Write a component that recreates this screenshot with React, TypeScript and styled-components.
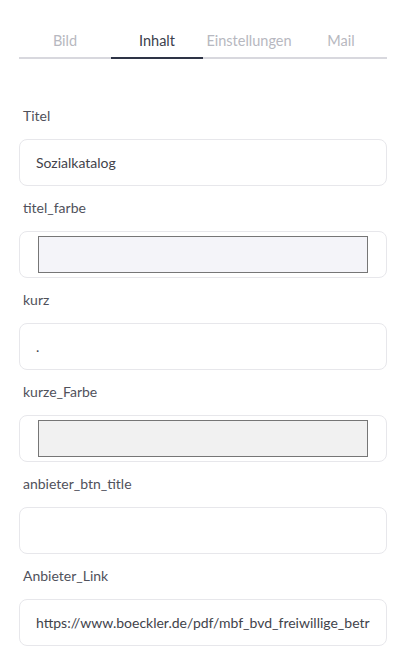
import styled, { createGlobalStyle } from "styled-components";

const GlobalStyle = createGlobalStyle`
  body {
    margin: 0;
    background: #ffffff;
    font-family: "Lato", "Noto Sans", sans-serif;
  }
`;

const TABS = ["Bild", "Inhalt", "Einstellungen", "Mail"];
const ACTIVE_TAB = "Inhalt";

type Field =
  | { label: string; kind: "text"; value: string }
  | { label: string; kind: "color"; color: string };

const FIELDS: Field[] = [
  { label: "Titel", kind: "text", value: "Sozialkatalog" },
  { label: "titel_farbe", kind: "color", color: "#f4f4f9" },
  { label: "kurz", kind: "text", value: "." },
  { label: "kurze_Farbe", kind: "color", color: "#f1f1f1" },
  { label: "anbieter_btn_title", kind: "text", value: "" },
  {
    label: "Anbieter_Link",
    kind: "text",
    value:
      "https://www.boeckler.de/pdf/mbf_bvd_freiwillige_betriebsvereinbarung.pdf",
  },
];

const App = () => {
  return (
    <Page>
      <GlobalStyle />
      <TabBar>
        {TABS.map((tab) => (
          <Tab key={tab} active={tab === ACTIVE_TAB}>
            {tab}
          </Tab>
        ))}
      </TabBar>
      <Form>
        {FIELDS.map((field) => (
          <Group key={field.label}>
            <Label>{field.label}</Label>
            {field.kind === "text" ? (
              <TextInput defaultValue={field.value} />
            ) : (
              <ColorBox>
                <Swatch color={field.color} />
              </ColorBox>
            )}
          </Group>
        ))}
      </Form>
    </Page>
  );
};

const Page = styled.div`
  padding: 31px 15px 0 19px;
`;

const TabBar = styled.div`
  display: grid;
  grid-template-columns: repeat(4, 1fr);
`;

const Tab = styled.button<{ active?: boolean }>`
  border: none;
  background: none;
  margin: 0;
  padding: 0 0 6px;
  font-family: "Lato", "Noto Sans", sans-serif;
  font-size: 14.5px;
  line-height: 20px;
  color: ${({ active }) => (active ? "#3b404c" : "#b7b8c0")};
  border-bottom: 2px solid ${({ active }) => (active ? "#2e3446" : "#d8d8de")};
  cursor: pointer;
`;

const Form = styled.div`
  display: flex;
  flex-direction: column;
  gap: 12px;
  margin-top: 47px;
`;

const Group = styled.div`
  display: flex;
  flex-direction: column;
  gap: 13px;
`;

const Label = styled.label`
  padding-left: 4px;
  font-size: 14px;
  line-height: 20px;
  color: #50515b;
`;

const TextInput = styled.input`
  box-sizing: border-box;
  width: 100%;
  height: 47px;
  padding: 0 16px 0 16px;
  border: 1px solid #e7e7eb;
  border-radius: 8px;
  background: #ffffff;
  font-family: "Lato", "Noto Sans", sans-serif;
  font-size: 14px;
  color: #42434b;
  outline: none;
`;

const ColorBox = styled.div`
  box-sizing: border-box;
  height: 47px;
  padding: 4px 18px;
  border: 1px solid #e7e7eb;
  border-radius: 8px;
  display: flex;
`;

const Swatch = styled.div<{ color: string }>`
  flex: 1;
  border: 1px solid #767676;
  background: ${({ color }) => color};
`;

export default App;
